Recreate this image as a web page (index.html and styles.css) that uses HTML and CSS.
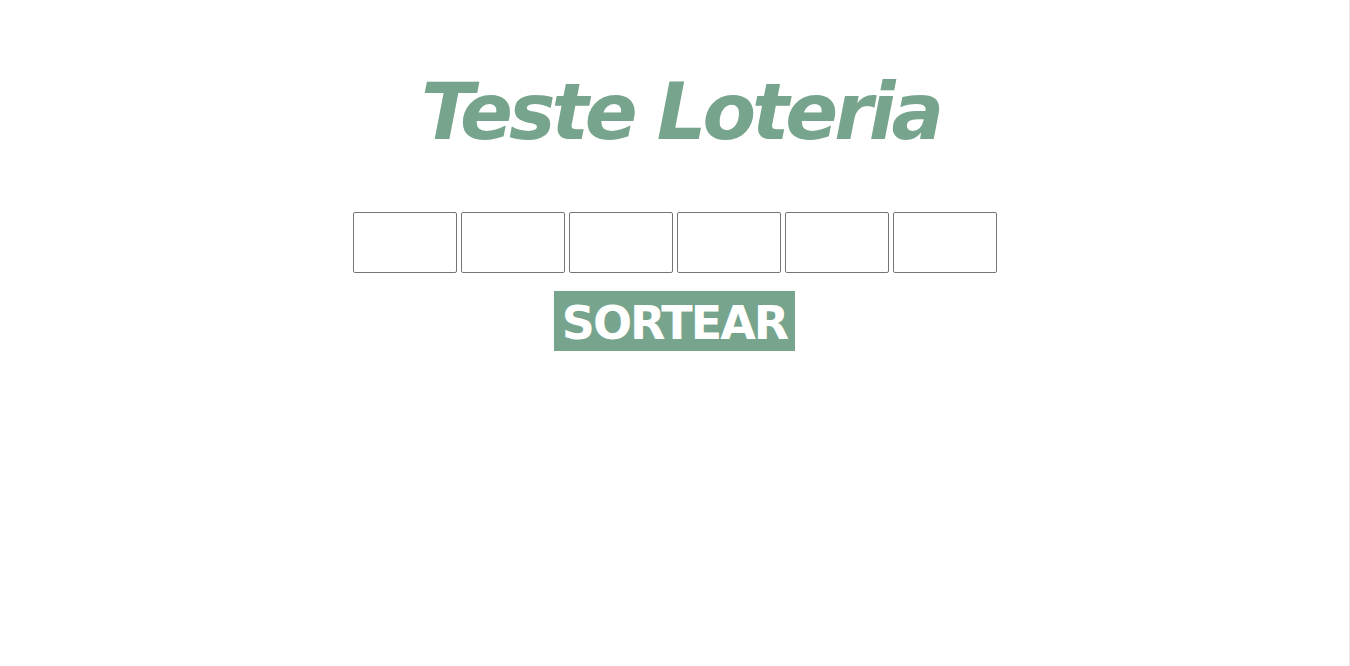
FILE: index.html
```html
<!DOCTYPE html>
<html lang="pt">
<head>
<meta charset="utf-8">
<title>Teste Loteria</title>
<link rel="stylesheet" href="styles.css">
</head>
<body>
<main class="app">
  <h1 class="title">Teste Loteria</h1>
  <div class="numbers">
    <input class="num" type="text">
    <input class="num" type="text">
    <input class="num" type="text">
    <input class="num" type="text">
    <input class="num" type="text">
    <input class="num" type="text">
  </div>
  <button class="draw" type="button">SORTEAR</button>
</main>
</body>
</html>
```
FILE: styles.css
```css
html, body {
  margin: 0;
  padding: 0;
  background: #fff;
}
body {
  font-family: "DejaVu Sans", Verdana, sans-serif;
  border-right: 1px solid #e8e8e8;
  min-height: 666px;
  box-sizing: border-box;
}
.app {
  display: flex;
  flex-direction: column;
  align-items: center;
  padding-top: 66px;
}
.title {
  margin: 0 0 0 12px;
  font-size: 78px;
  font-style: italic;
  font-weight: bold;
  color: #76a48c;
  line-height: 92px;
  letter-spacing: -4px;
}
.numbers {
  display: flex;
  gap: 4px;
  margin-top: 54px;
}
.num {
  width: 104px;
  height: 61px;
  box-sizing: border-box;
  border: 1px solid #767676;
  border-radius: 2px;
  margin: 0;
  padding: 0;
}
.draw {
  margin-top: 18px;
  height: 60px;
  width: 241px;
  padding: 3px 0 0;
  border: none;
  background: #76a48c;
  color: #fff;
  font-family: "DejaVu Sans", Verdana, sans-serif;
  font-weight: bold;
  font-size: 46px;
  letter-spacing: -2px;
}
```
